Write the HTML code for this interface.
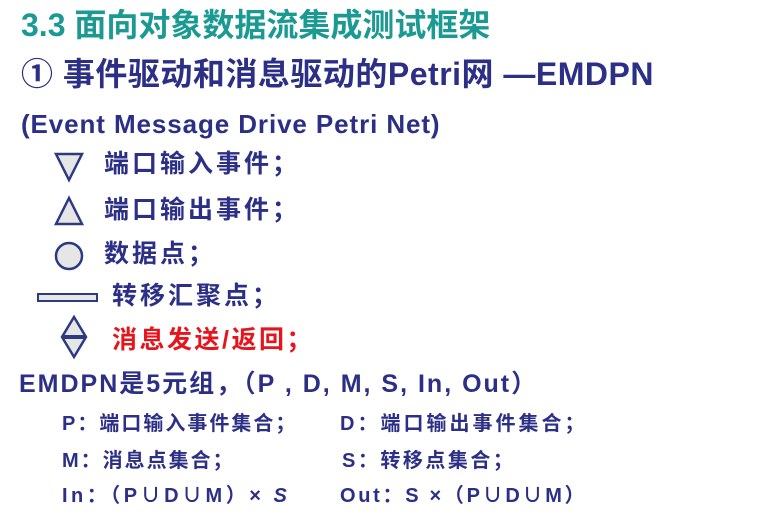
<!DOCTYPE html>
<html><head><meta charset="utf-8"><style>
body{margin:0;width:777px;height:516px;background:#fff;overflow:hidden;position:relative;font-family:"Liberation Sans","Noto Sans CJK SC",sans-serif;font-weight:bold;color:#2c2f86}
.t{position:absolute;white-space:nowrap;line-height:1}
svg{position:absolute}
</style></head><body>
<div class="t" style="left:21px;top:9px;font-size:32px;color:#1a9a93;">3.3 面向对象数据流集成测试框架</div>
<div class="t" style="left:21px;top:58px;font-size:32px;letter-spacing:0.5px;">① 事件驱动和消息驱动的Petri网 —EMDPN</div>
<div class="t" style="left:21px;top:111px;font-size:26px;letter-spacing:0.9px;">(Event Message Drive Petri Net)</div>
<svg style="left:50px;top:150px" width="40" height="40"><polygon points="6,4 32,4 19,30" fill="#e6e6e6" stroke="#2c3a80" stroke-width="2.5"/></svg>
<div class="t" style="left:104px;top:152px;font-size:25px;letter-spacing:3px;">端口输入事件；</div>
<svg style="left:50px;top:195px" width="40" height="40"><polygon points="19,3 32,29 6,29" fill="#e6e6e6" stroke="#2c3a80" stroke-width="2.5"/></svg>
<div class="t" style="left:104px;top:198px;font-size:25px;letter-spacing:3px;">端口输出事件；</div>
<svg style="left:50px;top:240px" width="40" height="40"><circle cx="19" cy="16" r="13" fill="#e6e6e6" stroke="#2c3a80" stroke-width="2.5"/></svg>
<div class="t" style="left:104px;top:242px;font-size:25px;letter-spacing:3px;">数据点；</div>
<svg style="left:36px;top:290px" width="66" height="16"><rect x="2" y="4" width="59" height="7" fill="#e6e6e6" stroke="#2c3a80" stroke-width="2"/></svg>
<div class="t" style="left:112px;top:284px;font-size:25px;letter-spacing:3px;">转移汇聚点；</div>
<svg style="left:55px;top:315px" width="40" height="50"><polygon points="19,2 31,22 19,42 7,22" fill="#e6e6e6" stroke="#2c3a80" stroke-width="2.5"/><line x1="7" y1="22" x2="31" y2="22" stroke="#2c3a80" stroke-width="4"/></svg>
<div class="t" style="left:112px;top:328px;font-size:25px;letter-spacing:2.5px;color:#e8141c;">消息发送/返回；</div>
<div class="t" style="left:19px;top:372px;font-size:25px;letter-spacing:2px;">EMDPN是5元组，（P , D, M, S, In, Out）</div>
<div class="t" style="left:62px;top:414px;font-size:20px;letter-spacing:2px;">P：端口输入事件集合；</div>
<div class="t" style="left:340px;top:414px;font-size:20px;letter-spacing:3px;">D：端口输出事件集合；</div>
<div class="t" style="left:62px;top:451px;font-size:20px;letter-spacing:2px;">M：消息点集合；</div>
<div class="t" style="left:342px;top:451px;font-size:20px;letter-spacing:2.5px;">S：转移点集合；</div>
<div class="t" style="left:62px;top:486px;font-size:20px;letter-spacing:3.5px;">In：（P∪D∪M）× <i>S</i></div>
<div class="t" style="left:340px;top:486px;font-size:20px;letter-spacing:2.7px;">Out：S ×（P∪D∪M）</div>
</body></html>
